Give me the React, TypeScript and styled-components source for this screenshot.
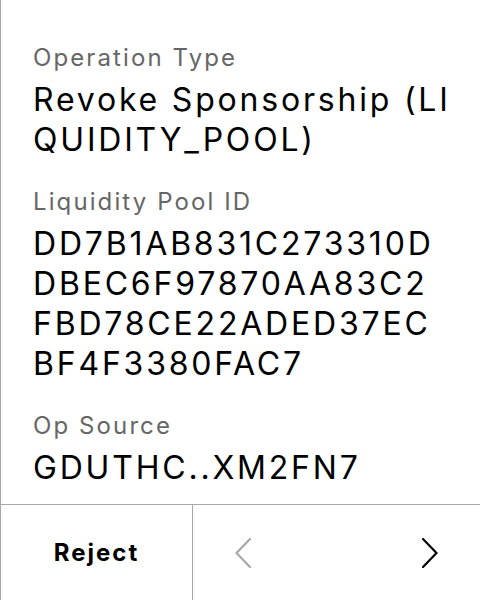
import React from "react";
import styled, { createGlobalStyle } from "styled-components";

const Global = createGlobalStyle`
  html, body { margin: 0; padding: 0; background: #ffffff; }
  body { font-family: Inter, "Noto Sans", sans-serif; -webkit-font-smoothing: antialiased; }
  * { box-sizing: border-box; }
`;

const Screen = styled.div`
  width: 480px;
  height: 600px;
  display: flex;
  flex-direction: column;
  background: #ffffff;
  border-left: 1px solid #a8a8a8;
  overflow: hidden;
`;

const Content = styled.div`
  flex: 1;
  display: flex;
  flex-direction: column;
  gap: 26px;
  padding: 42px 0 0 32px;
`;

const Field = styled.div`
  display: flex;
  flex-direction: column;
  gap: 6px;
`;

const Label = styled.div`
  font-size: 24px;
  line-height: 32px;
  letter-spacing: 2.1px;
  color: #666666;
`;

const Value = styled.div`
  font-size: 32px;
  line-height: 40px;
  letter-spacing: 2.8px;
  color: #000000;
`;

const Line = styled.span`
  display: block;
  white-space: nowrap;
`;

const Footer = styled.div`
  height: 96px;
  flex: 0 0 96px;
  display: grid;
  grid-template-columns: 192px 1fr;
  border-top: 1px solid #a8a8a8;
`;

const RejectButton = styled.div`
  display: flex;
  align-items: center;
  justify-content: center;
  font-size: 24px;
  font-weight: 650;
  letter-spacing: 2px;
  color: #000000;
  border-right: 1px solid #a8a8a8;
`;

const Nav = styled.div`
  display: flex;
  align-items: center;
  justify-content: space-between;
  padding: 0 42px;
`;

const Chevron = ({ dir, color }: { dir: "left" | "right"; color: string }) => (
  <svg width="16" height="30" viewBox="0 0 16 30" fill="none">
    <path
      d={dir === "left" ? "M15 1 L1.5 15 L15 29" : "M1 1 L14.5 15 L1 29"}
      stroke={color}
      strokeWidth="2.2"
      strokeLinecap="square"
    />
  </svg>
);

const fields: { label: string; lines: string[] }[] = [
  { label: "Operation Type", lines: ["Revoke Sponsorship (LI", "QUIDITY_POOL)"] },
  {
    label: "Liquidity Pool ID",
    lines: ["DD7B1AB831C273310D", "DBEC6F97870AA83C2", "FBD78CE22ADED37EC", "BF4F3380FAC7"],
  },
  { label: "Op Source", lines: ["GDUTHC..XM2FN7"] },
];

export default function App() {
  return (
    <>
      <Global />
      <Screen>
        <Content>
          {fields.map((f) => (
            <Field key={f.label}>
              <Label>{f.label}</Label>
              <Value>
                {f.lines.map((l, i) => (
                  <Line key={i}>{l}</Line>
                ))}
              </Value>
            </Field>
          ))}
        </Content>
        <Footer>
          <RejectButton>Reject</RejectButton>
          <Nav>
            <Chevron dir="left" color="#a8a8a8" />
            <Chevron dir="right" color="#000000" />
          </Nav>
        </Footer>
      </Screen>
    </>
  );
}
